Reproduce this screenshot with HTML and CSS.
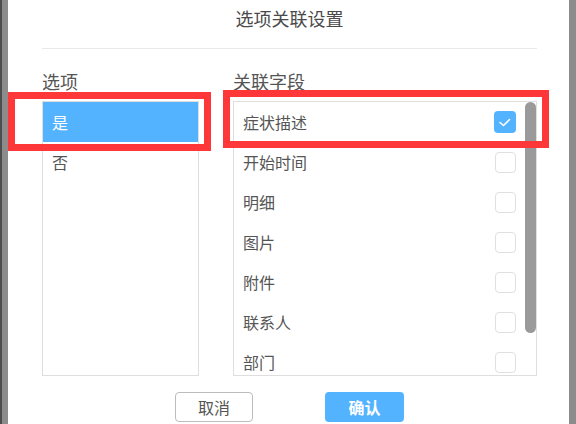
FILE: index.html
```html
<!DOCTYPE html>
<html lang="zh">
<head>
<meta charset="utf-8">
<title>选项关联设置</title>
<link rel="stylesheet" href="styles.css">
</head>
<body>
<div class="dialog">
  <div class="header"><span class="title">选项关联设置</span></div>
  <div class="grid">
    <div class="label">选项</div>
    <div class="label">关联字段</div>
    <div class="list">
      <div class="opt active">是</div>
      <div class="opt">否</div>
    </div>
    <div class="list fields">
      <div class="field"><span>症状描述</span><span class="cb checked"><svg viewBox="0 0 22 22" width="22" height="22"><polyline points="6,11.5 9.5,14.5 15.5,8.5" fill="none" stroke="#fff" stroke-width="1.6" stroke-linecap="round" stroke-linejoin="round"/></svg></span></div>
      <div class="field"><span>开始时间</span><span class="cb"></span></div>
      <div class="field"><span>明细</span><span class="cb"></span></div>
      <div class="field"><span>图片</span><span class="cb"></span></div>
      <div class="field"><span>附件</span><span class="cb"></span></div>
      <div class="field"><span>联系人</span><span class="cb"></span></div>
      <div class="field"><span>部门</span><span class="cb"></span></div>
      <div class="thumb"></div>
    </div>
  </div>
  <div class="actions">
    <button class="btn cancel">取消</button>
    <button class="btn ok">确认</button>
  </div>
</div>
<div class="mark mark-left"></div>
<div class="mark mark-right"></div>
</body>
</html>
```
FILE: styles.css
```css
html, body {
  margin: 0;
  padding: 0;
}
body {
  width: 576px;
  height: 424px;
  overflow: hidden;
  background: #8c8c8c;
  box-shadow: inset 2px 0 0 #4e4e4e;
  font-family: "Noto Sans CJK SC", "Noto Sans", sans-serif;
  color: #555;
  position: relative;
}
.dialog {
  margin-left: 8px;
  width: 561px;
  height: 424px;
  background: #fff;
  box-sizing: border-box;
  padding: 0 32px 0 34px;
}
.header {
  height: 48px;
  border-bottom: 1px solid #e9e9e9;
  text-align: center;
  box-sizing: content-box;
}
.title {
  display: inline-block;
  margin-top: 6px;
  font-size: 18px;
  line-height: 24px;
  color: #4a4a4a;
}
.grid {
  display: grid;
  grid-template-columns: 157px 304px;
  column-gap: 34px;
}
.label {
  margin-top: 20px;
  margin-bottom: 8px;
  font-size: 18px;
  line-height: 24px;
  color: #555;
}
.list {
  height: 275px;
  border: 1px solid #dedede;
  box-sizing: border-box;
  overflow: hidden;
  position: relative;
}
.opt {
  height: 40px;
  line-height: 40px;
  padding-left: 9px;
  font-size: 16px;
  color: #555;
}
.opt.active {
  background: #54b3ff;
  color: #fff;
}
.field {
  height: 40px;
  display: flex;
  align-items: center;
  justify-content: space-between;
  padding: 0 20px 0 9px;
  font-size: 16px;
  color: #555;
}
.cb {
  width: 21px;
  height: 21px;
  border: 1px solid #e0e0e0;
  border-radius: 4px;
  box-sizing: border-box;
  display: block;
}
.cb.checked {
  width: 22px;
  height: 22px;
  border: none;
  background: #54b3ff;
}
.cb svg {
  display: block;
}
.thumb {
  position: absolute;
  top: 0;
  right: 0;
  width: 11px;
  height: 231px;
  border-radius: 6px;
  background: #9a9a9a;
}
.actions {
  display: flex;
  justify-content: center;
  gap: 72px;
  margin-top: 16px;
}
.btn {
  width: 78px;
  height: 30px;
  border-radius: 4px;
  font-family: "Noto Sans CJK SC", "Noto Sans", sans-serif;
  font-size: 16px;
  padding: 0;
  box-sizing: border-box;
}
.cancel {
  background: #fff;
  border: 1px solid #bcbcbc;
  color: #555;
}
.ok {
  width: 79px;
  background: #54b3ff;
  border: none;
  color: #fff;
  font-weight: bold;
}
.mark {
  position: absolute;
  border: 7px solid #fe3838;
  box-sizing: border-box;
}
.mark-left {
  left: 8px;
  top: 92px;
  width: 203px;
  height: 59px;
}
.mark-right {
  left: 223px;
  top: 90px;
  width: 326px;
  height: 58px;
}
```
